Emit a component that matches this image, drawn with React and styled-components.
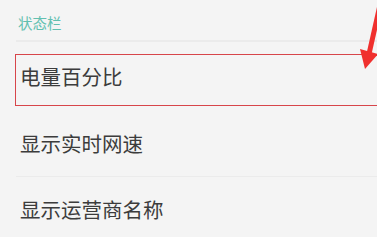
import React from "react";
import styled, { createGlobalStyle } from "styled-components";

const Global = createGlobalStyle`
  html, body { margin: 0; padding: 0; background: #f4f4f4; }
  body { font-family: "Noto Sans CJK SC", "Noto Sans", sans-serif; overflow: hidden; }
`;

const Page = styled.div`
  position: relative;
  width: 377px;
  height: 237px;
  background: #f4f4f4;
  overflow: hidden;
`;

const SectionTitle = styled.div`
  height: 40px;
  display: flex;
  align-items: center;
  padding-left: 18px;
  font-size: 14.5px;
  color: #62c0b0;
  box-sizing: border-box;
  padding-top: 5px;
`;

const Divider = styled.div`
  height: 1.5px;
  margin-left: 16px;
  background: #ebebeb;
`;

const Row = styled.div`
  height: ${(p) => p.$h || 67}px;
  display: flex;
  align-items: center;
  padding-left: 20px;
  font-size: 20.5px;
  color: #3c3c3c;
  box-sizing: border-box;
`;

const Highlight = styled.div`
  position: absolute;
  left: 15px;
  top: 54px;
  width: 380px;
  height: 52px;
  border: 1px solid #d7454a;
  box-sizing: border-box;
  pointer-events: none;
`;

const Arrow = styled.svg`
  position: absolute;
  left: 0;
  top: 0;
  pointer-events: none;
`;

export default function App() {
  return (
    <Page>
      <Global />
      <SectionTitle>状态栏</SectionTitle>
      <Divider />
      <Row $h={68}>电量百分比</Row>
      <Row $h={66}>显示实时网速</Row>
      <Divider />
      <Row $h={64}>显示运营商名称</Row>
      <Highlight />
      <Arrow width="377" height="237" viewBox="0 0 377 237">
        <line x1="382" y1="-4" x2="369" y2="54" stroke="#f0302e" strokeWidth="5" />
        <polygon points="360,49 378,54 365,69" fill="#f0302e" />
      </Arrow>
    </Page>
  );
}
